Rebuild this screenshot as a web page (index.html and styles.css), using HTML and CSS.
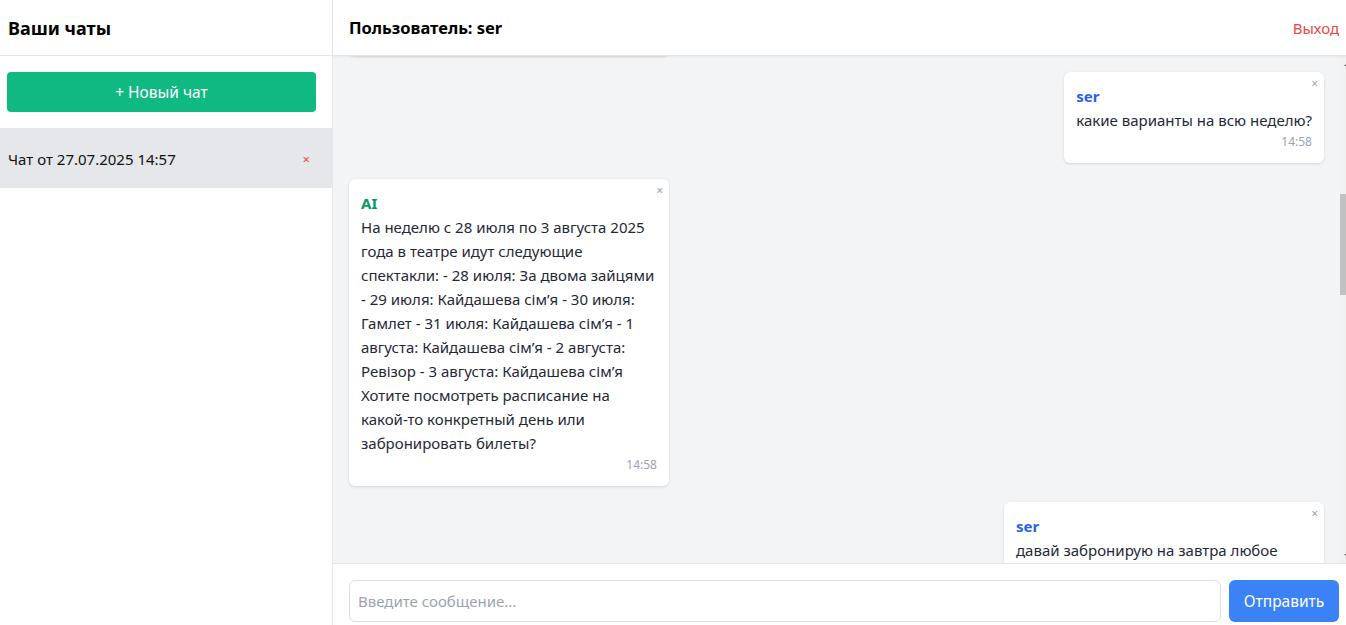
FILE: index.html
```html
<!DOCTYPE html>
<html lang="ru">
<head>
<meta charset="utf-8">
<title>Чаты</title>
<link rel="stylesheet" href="styles.css">
</head>
<body>
<div class="app">
  <aside class="sidebar">
    <div class="sidebar-header"><h2 class="sidebar-title">Ваши чаты</h2></div>
    <div class="sidebar-actions"><button class="new-chat" type="button">+ Новый чат</button></div>
    <ul class="chat-list">
      <li class="chat-item active"><span class="chat-name">Чат от 27.07.2025 14:57</span><button class="chat-delete" type="button">×</button></li>
    </ul>
  </aside>
  <main class="chat">
    <header class="chat-header">
      <h1 class="chat-title">Пользователь: ser</h1>
      <button class="logout" type="button">Выход</button>
    </header>
    <div class="messages-wrap">
      <div class="messages" id="messages">
        <div class="msg user"><button class="msg-close" type="button">×</button><div class="msg-author">ser</div><div class="msg-text">привет</div><div class="msg-time">14:57</div></div>
        <div class="msg ai"><button class="msg-close" type="button">×</button><div class="msg-author">AI</div><div class="msg-text">Здравствуйте! Я помогу вам узнать расписание спектаклей и забронировать билеты в театр. Что вас интересует?</div><div class="msg-time">14:57</div></div>
        <div class="msg user"><button class="msg-close" type="button">×</button><div class="msg-author">ser</div><div class="msg-text">что идёт сегодня?</div><div class="msg-time">14:57</div></div>
        <div class="msg ai"><button class="msg-close" type="button">×</button><div class="msg-author">AI</div><div class="msg-text">Сегодня, 27 июля 2025 года, в театре идёт спектакль «Кайдашева сім’я». Начало в 19:00. Продолжительность спектакля около двух с половиной часов с одним антрактом. Хотите забронировать билеты на сегодня или посмотреть другие даты?</div><div class="msg-time">14:57</div></div>
        <div class="msg user" id="anchor"><button class="msg-close" type="button">×</button><div class="msg-author">ser</div><div class="msg-text">какие варианты на всю неделю?</div><div class="msg-time">14:58</div></div>
        <div class="msg ai"><button class="msg-close" type="button">×</button><div class="msg-author">AI</div><div class="msg-text">На неделю с 28 июля по 3 августа 2025 года в театре идут следующие спектакли: - 28 июля: За двома зайцями - 29 июля: Кайдашева сім’я - 30 июля: Гамлет - 31 июля: Кайдашева сім’я - 1 августа: Кайдашева сім’я - 2 августа: Ревізор - 3 августа: Кайдашева сім’я Хотите посмотреть расписание на какой-то конкретный день или забронировать билеты?</div><div class="msg-time">14:58</div></div>
        <div class="msg user"><button class="msg-close" type="button">×</button><div class="msg-author">ser</div><div class="msg-text">давай забронирую на завтра любое место</div><div class="msg-time">14:59</div></div>
        <div class="msg ai"><button class="msg-close" type="button">×</button><div class="msg-author">AI</div><div class="msg-text">Отлично! Завтра, 28 июля 2025 года, в театре идёт спектакль «За двома зайцями». Начало в 19:00. Свободные места есть в партере, амфитеатре и на балконе. Подтвердите, пожалуйста, количество билетов и ваше имя для бронирования.</div><div class="msg-time">14:59</div></div>
        <div class="msg user"><button class="msg-close" type="button">×</button><div class="msg-author">ser</div><div class="msg-text">один билет, имя Сергей</div><div class="msg-time">15:00</div></div>
        <div class="msg ai"><button class="msg-close" type="button">×</button><div class="msg-author">AI</div><div class="msg-text">Готово! Для вас забронирован один билет на спектакль «За двома зайцями» 28 июля 2025 года в 19:00. Партер, ряд 7, место 12. Бронь на имя Сергей.</div><div class="msg-time">15:00</div></div>
      </div>
      <div class="scrollbar" aria-hidden="true">
        <span class="sb-btn sb-up"></span>
        <span class="sb-track"><span class="sb-thumb"></span></span>
        <span class="sb-btn sb-down"></span>
      </div>
    </div>
    <form class="composer">
      <input class="composer-input" type="text" placeholder="Введите сообщение...">
      <button class="send" type="button">Отправить</button>
    </form>
  </main>
</div>
<script src="script.js"></script>
</body>
</html>
```

FILE: styles.css
```css
* { box-sizing: border-box; }
html, body { margin: 0; padding: 0; overflow: hidden; background: #fff; }
body { font-family: "Noto Sans", "Open Sans", sans-serif; color: #111827; }

.app {
  width: 1355px;
  height: 638px;
  display: flex;
}

.sidebar {
  width: 333px;
  flex: none;
  border-right: 1px solid #e5e7eb;
  background: #fff;
  display: flex;
  flex-direction: column;
}
.sidebar-header {
  height: 56px;
  border-bottom: 1px solid #e5e7eb;
  display: flex;
  align-items: center;
  padding: 0 8px;
}
.sidebar-title {
  margin: 0;
  font-size: 18px;
  font-weight: 700;
  color: #000;
}
.sidebar-actions { padding: 16px 16px 16px 7px; }
.new-chat {
  width: 100%;
  height: 40px;
  border: 0;
  border-radius: 4px;
  background: #10b981;
  color: #fff;
  font-family: inherit;
  font-size: 15.5px;
}
.chat-list { list-style: none; margin: 0; padding: 0; }
.chat-item {
  height: 60px;
  display: flex;
  align-items: center;
  justify-content: space-between;
  padding: 2px 18px 0 8px;
}
.chat-item.active { background: #e5e7eb; }
.chat-name { font-size: 15px; color: #111; }
.chat-delete {
  border: 0;
  background: none;
  color: #ef4444;
  font-size: 13px;
  padding: 0 4px;
  font-family: inherit;
}

.chat {
  flex: 1;
  min-width: 0;
  display: flex;
  flex-direction: column;
}
.chat-header {
  height: 56px;
  flex: none;
  border-bottom: 1px solid #e5e7eb;
  box-shadow: 0 1px 2px rgba(0,0,0,0.05);
  display: flex;
  align-items: center;
  justify-content: space-between;
  padding: 0 16px;
  position: relative;
  z-index: 1;
  background: #fff;
}
.chat-title { margin: 0; font-size: 16.5px; font-weight: 700; color: #000; }
.logout {
  border: 0;
  background: none;
  padding: 0;
  color: #ef4444;
  font-family: inherit;
  font-size: 15px;
}

.messages-wrap {
  flex: 1;
  min-height: 0;
  display: flex;
  background: #f3f4f6;
}
.messages {
  flex: 1;
  min-width: 0;
  overflow-y: auto;
  scrollbar-width: none;
  padding: 16px;
  display: flex;
  flex-direction: column;
  gap: 16px;
  position: relative;
}
.messages::-webkit-scrollbar { display: none; }

.scrollbar {
  width: 15px;
  flex: none;
  background: #f1f1f1;
  display: flex;
  flex-direction: column;
}
.sb-btn {
  height: 15px;
  flex: none;
  display: flex;
  align-items: center;
  justify-content: center;
}
.sb-btn::before {
  content: "";
  width: 0;
  height: 0;
  border-left: 4px solid transparent;
  border-right: 4px solid transparent;
}
.sb-up::before { border-bottom: 4px solid #606060; }
.sb-down::before { border-top: 4px solid #606060; }
.sb-track {
  flex: 1;
  display: flex;
  flex-direction: column;
  padding-top: 123px;
}
.sb-thumb {
  height: 101px;
  background: #c1c1c1;
}

.msg {
  position: relative;
  max-width: 320px;
  background: #fff;
  border-radius: 6px;
  box-shadow: 0 1px 3px rgba(0,0,0,0.12);
  padding: 12px 12px 13px;
  flex: none;
}
.msg.user { align-self: flex-end; }
.msg.ai { align-self: flex-start; }
.msg-author { font-size: 15px; font-weight: 700; line-height: 24px; }
.msg.user .msg-author { color: #2563eb; }
.msg.ai .msg-author { color: #059669; }
.msg-text { font-size: 15px; line-height: 24px; color: #1f2937; }
.msg-time {
  margin-top: 2px;
  font-size: 12px;
  line-height: 16px;
  color: #9ca3af;
  text-align: right;
}
.msg-close {
  position: absolute;
  top: 4px;
  right: 4px;
  border: 0;
  background: none;
  padding: 0 2px;
  color: #9ca3af;
  font-size: 12px;
  line-height: 16px;
  font-family: inherit;
}

.composer {
  flex: none;
  border-top: 1px solid #e5e7eb;
  padding: 16px;
  display: flex;
  gap: 8px;
  margin: 0;
  background: #fff;
}
.composer-input {
  flex: 1;
  height: 42px;
  border: 1px solid #dcdfe4;
  border-radius: 6px;
  padding: 0 8px;
  font-family: inherit;
  font-size: 15px;
  color: #111827;
}
.composer-input::placeholder { color: #9ca3af; }
.send {
  width: 110px;
  height: 42px;
  border: 0;
  border-radius: 6px;
  background: #3b82f6;
  color: #fff;
  font-family: inherit;
  font-size: 15.5px;
}
```

FILE: script.js
```js
(function () {
  var box = document.getElementById('messages');
  var anchor = document.getElementById('anchor');
  if (box && anchor) {
    box.scrollTop = anchor.offsetTop - 16;
  }
})();
```
